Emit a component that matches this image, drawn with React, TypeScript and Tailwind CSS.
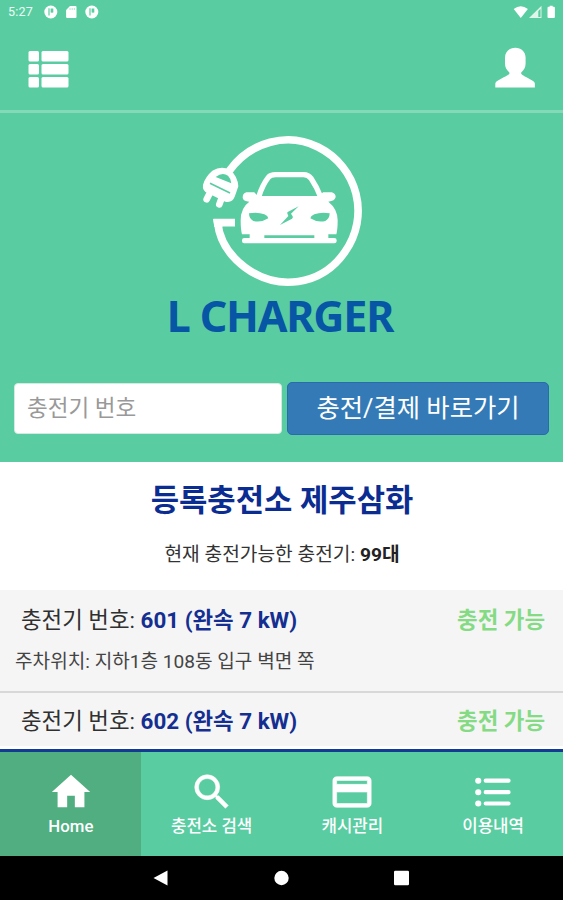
import type { ReactNode } from "react";

function StatusBar() {
  return (
    <div className="flex h-6 items-center justify-between pr-[7px] pl-2">
      <div className="flex items-center">
        <span className="w-[36px] text-[12.5px] leading-6 tracking-[0.2px] text-white/90">5:27</span>
        <svg width="56" height="14" viewBox="0 0 56 14" fill="#fff">
          <circle cx="6.8" cy="7" r="6.5" />
          <path d="M5 3.300v7.200M8 4.200v3.600M7.200 4.200h1.500v2.600H7.200z" stroke="#59cda1" strokeWidth="1.2" fill="none" />
          <path d="M26 1h5.500a1 1 0 0 1 1 1v10a1 1 0 0 1-1 1h-8.400a1 1 0 0 1-1-1V5z" />
          <path d="M26 3v2M28.200 3v2M30.300 3v2" stroke="#59cda1" strokeWidth=".5" />
          <circle cx="47.800" cy="7" r="6.5" />
          <path d="M46 3.300v7.200M49 4.200v3.600M48.200 4.200h1.500v2.600h-1.500z" stroke="#59cda1" strokeWidth="1.2" fill="none" />
        </svg>
      </div>
      <svg width="43" height="14" viewBox="0 0 43 14" fill="#fff">
        <path d="M.7 3.900Q7.700-1.500 14.900 3.900L7.800 12.900z" />
        <path d="M28.500.7v12.300H16z" fillOpacity=".8" />
        <path d="M25.300 6v6h2.200V4z" fill="#59cda1" />
        <path d="M34.500 2.800q0-1 1-1h1.200V.8h3v1h1.200q1 0 1 1v9.200q0 1-1 1h-5.400q-1 0-1-1z" />
      </svg>
    </div>
  );
}

function Header() {
  return (
    <div className="flex h-[86px] items-start justify-between pt-[22px] pr-7 pl-7">
      <svg className="mt-[5px]" width="41" height="37" viewBox="0 0 41 37" fill="#fff">
        <rect x=".5" width="10.500" height="10.500" rx="1.500" />
        <rect x="13.500" width="27" height="10.500" rx="1.500" />
        <rect x=".5" y="13" width="10.500" height="10.500" rx="1.500" />
        <rect x="13.500" y="13" width="27" height="10.500" rx="1.500" />
        <rect x=".5" y="26" width="10.500" height="10.500" rx="1.500" />
        <rect x="13.500" y="26" width="27" height="10.500" rx="1.500" />
      </svg>
      <svg className="mt-[1px]" width="40" height="41" viewBox="0 0 40 41" fill="#fff">
        <path d="M20.300.7c5.800 0 10.300 4 10.300 9.700v6.200c0 4-1.600 6.500-4.400 8.900v1.200c1 1.300 3 2.300 5.300 3.600l5.700 3.200c1.800 1 2.700 1.800 2.700 3.700v3.300H.3v-3.300c0-1.900.9-2.700 2.700-3.700l5.700-3.200c2.300-1.300 4.700-2.300 5.700-3.600v-1.200c-2.800-2.400-4.400-4.900-4.400-8.900v-6.200C10 4.700 14.500.7 20.300.7z" />
      </svg>
    </div>
  );
}

function Logo() {
  return (
    <svg className="mx-auto block" width="190" height="170" viewBox="0 0 570 510" fill="#fff">
      <path d="M121 137C184 50 296 20 387 66C507 126 544 274 467 382C397 482 266 500 168 427C116 388 91 344 86 293H138" fill="none" stroke="#fff" strokeWidth="23" />
      <path d="M72 282h28v24H76z" />
      <g>
        <path d="M70 137Q96 121 123 134Q146 153 148 184L138 213Q130 235 109 230L57 205Q39 197 42 179Q49 155 70 137z" />
        <path d="M61 207 53 223M98 219l-7 19" stroke="#fff" strokeWidth="20" strokeLinecap="round" />
        <path d="M80 156Q100 140 117 152Q126 161 127 175z" fill="#59cda1" />
        <path d="M63 175 123 204" stroke="#59cda1" strokeWidth="5" />
      </g>
      <path d="M209 216Q220 180 238 157Q244 149 260 149H344Q358 149 366 160Q384 187 396 218" fill="none" stroke="#fff" strokeWidth="16" strokeLinejoin="round" />
      <path d="M172 202h24l10 11H392l10-11h26q12 3 12 14-2 12-22 14 28 22 28 56 0 28-4 42H159q-4-14-4-42 0-38 26-56-19-2-20-12 0-13 11-16z" />
      <path d="M182 324H418V345H182z" />
      <rect x="159" y="339" width="284" height="16" rx="7" />
      <path d="M226 331H376v8H226z" fill="#59cda1" />
      <path d="M180 265Q206 260 226 268Q237 273 238 280Q216 294 193 288Q180 281 180 265zM422 265Q396 260 376 268Q365 273 364 280Q386 294 409 288Q422 281 422 265z" fill="#59cda1" />
      <path d="M329 244 296 261Q293 264 296 268L298 273 273 300 309 281Q313 278 311 274L306 266z" fill="#59cda1" />
    </svg>
  );
}

function ChargerTitle({ id }: { id: string }) {
  return (
    <div className="flex items-center justify-between pr-[18px] pl-[21px] text-[22.4px] leading-[30px]">
      <div className="whitespace-pre text-[#303030]">
        충전기 번호: <span className="font-bold text-[#142f91]">{id} (완속 7 kW)</span>
      </div>
      <div className="font-bold text-[#84db84]">충전 가능</div>
    </div>
  );
}

function NavItem({ label, active, children }: { label: string; active?: boolean; children: ReactNode }) {
  return (
    <div className={`flex flex-1 flex-col items-center pt-[17px] pl-[1px] text-white ${active ? "bg-[#50ae80]" : ""}`}>
      <svg width="46" height="46" viewBox="0 0 24 24" fill="currentColor">
        {children}
      </svg>
      <div className="text-[16.8px] leading-[22px] font-medium whitespace-nowrap">{label}</div>
    </div>
  );
}

export default function App() {
  return (
    <div className="flex h-[900px] w-[563px] flex-col overflow-hidden bg-white font-[Roboto,'Noto_Sans_CJK_KR',sans-serif]">
      <div className="h-[462px] shrink-0 bg-[#59cda1]">
        <StatusBar />
        <Header />
        <div className="h-[3px] bg-[#83dab8]" />
        <div className="h-[12px]" />
        <div className="pl-[5px]">
          <Logo />
        </div>
        <div className="h-[87px] pr-[3px] text-center font-['Noto_Sans',sans-serif] text-[43px] leading-[41px] font-bold tracking-[-1.2px] whitespace-nowrap text-[#0755a5]">
          L CHARGER
        </div>
        <div className="flex items-center gap-[5px] px-[14px]">
          <div className="h-[51px] w-[268px] rounded-[4px] border border-[#d5ebe2] bg-white pl-3 text-[22.5px] leading-[49px] text-[#999]">
            충전기 번호
          </div>
          <button className="h-[53px] flex-1 rounded-[5px] border border-[#2b6aac] bg-[#337ab7] text-[25.3px] leading-[50px] text-white">
            충전/결제 바로가기
          </button>
        </div>
      </div>

      <div className="h-[128px] shrink-0 pt-[19px] text-center">
        <h1 className="pl-[1px] text-[30.8px] leading-[40px] font-bold text-[#0b2d91]">등록충전소 제주삼화</h1>
        <p className="pt-[21px] pl-[1px] text-[19.2px] leading-[26px] text-[#333]">
          현재 충전가능한 충전기: <span className="font-bold text-[#222]">99대</span>
        </p>
      </div>

      <div className="h-[103px] shrink-0 border-b-2 border-[#d8d8d8] bg-[#f5f5f5] pt-[15px]">
        <ChargerTitle id="601" />
        <div className="pt-[14px] pl-[15px] text-[19.1px] leading-[26px] text-[#444]">
          주차위치: 지하1층 108동 입구 벽면 쪽
        </div>
      </div>
      <div className="h-[53px] shrink-0 bg-[#f5f5f5] pt-[13px]">
        <ChargerTitle id="602" />
      </div>
      <div className="h-[3px] shrink-0 bg-white" />
      <div className="flex h-[107px] shrink-0 border-t-[3px] border-[#123c91] bg-[#59cda1]">
        <NavItem label="Home" active>
          <path d="M10 20v-6h4v6h5v-8h3L12 3 2 12h3v8z" />
        </NavItem>
        <NavItem label="충전소 검색">
          <path d="M15.500 14h-.79l-.28-.27A6.471 6.471 0 0 0 16 9.500 6.500 6.500 0 1 0 9.500 16c1.610 0 3.090-.59 4.230-1.570l.27.28v.79l5 4.990L20.490 19zm-6 0C7.010 14 5 11.990 5 9.500S7.010 5 9.500 5 14 7.010 14 9.500 11.990 14 9.500 14z" stroke="currentColor" strokeWidth=".3" />
        </NavItem>
        <NavItem label="캐시관리">
          <path d="M20 4H4c-1.110 0-1.990.89-1.990 2L2 18c0 1.110.89 2 2 2h16c1.110 0 2-.89 2-2V6c0-1.110-.89-2-2-2zm0 14H4v-6h16zm0-10H4V6h16z" stroke="currentColor" strokeWidth=".3" />
        </NavItem>
        <NavItem label="이용내역">
          <path d="M4.300 6.100h.01M4.300 12.100h.01M4.300 18h.01" stroke="currentColor" strokeWidth="3.200" strokeLinecap="round" />
          <path d="M8.200 6.100h11.900M8.200 12.100h11.900M8.200 18h11.900" stroke="currentColor" strokeWidth="2.200" strokeLinecap="round" />
        </NavItem>
      </div>
      <div className="flex h-[44px] shrink-0 items-center justify-center bg-black">
        <svg width="257" height="16" viewBox="0 0 257 16" fill="#fff">
          <path d="M.5 8 14.500.5v15z" />
          <circle cx="128.500" cy="8" r="7.200" />
          <rect x="241" y=".7" width="15" height="14.600" rx="1.200" />
        </svg>
      </div>
    </div>
  );
}
